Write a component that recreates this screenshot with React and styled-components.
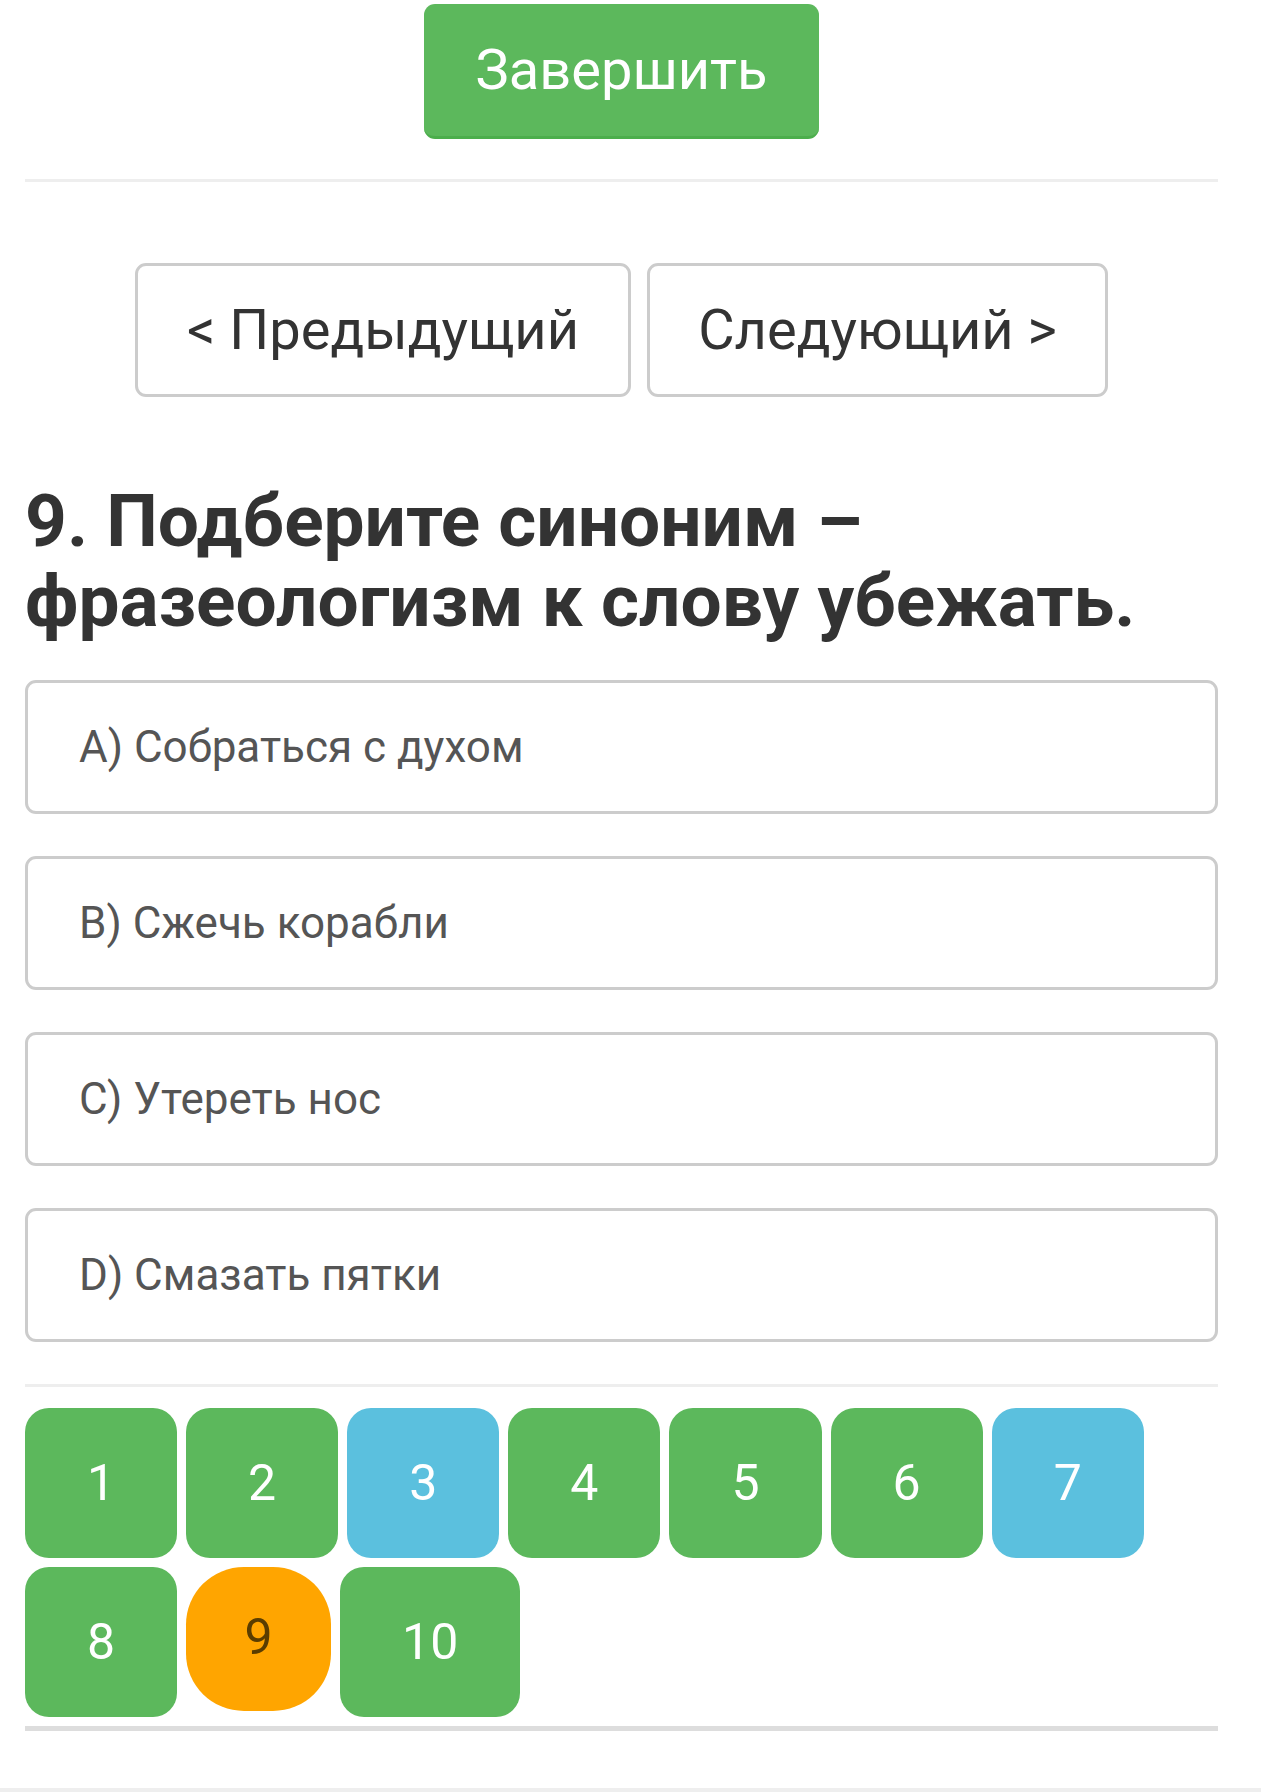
import React from "react";
import styled, { createGlobalStyle } from "styled-components";

const Global = createGlobalStyle`
  html, body { margin: 0; padding: 0; background: #fff; }
  body { font-family: Roboto, "Noto Sans", "Liberation Sans", sans-serif; }
`;

const Page = styled.div`
  width: 1193px;
  margin-left: 25px;
  padding-top: 4px;
  min-height: 1792px;
  box-sizing: border-box;
  position: relative;
`;

const Center = styled.div`
  display: flex;
  justify-content: center;
  gap: ${(p) => p.$gap || 0}px;
  margin-top: ${(p) => p.$mt || 0}px;
`;

const FinishButton = styled.button`
  width: 395px;
  height: 135px;
  background: #5cb85c;
  border: none;
  border-bottom: 3px solid #4cae4c;
  border-radius: 11px;
  color: #fff;
  font-family: Roboto, sans-serif;
  font-size: 56px;
  padding: 0;
`;

const Rule = styled.hr`
  border: none;
  height: ${(p) => p.$h || 3}px;
  background: ${(p) => p.$c || "#eee"};
  margin: ${(p) => p.$mt || 0}px 0 0 0;
`;

const NavButton = styled.button`
  width: ${(p) => p.$w}px;
  height: 134px;
  background: #fff;
  border: 3px solid #ccc;
  border-radius: 11px;
  color: #333;
  font-family: Roboto, sans-serif;
  font-size: 56px;
  padding: 0;
`;

const Question = styled.h3`
  margin: 84px 0 0 0;
  font-family: Roboto, sans-serif;
  font-weight: 700;
  font-size: 73px;
  line-height: 80px;
  color: #333;
`;

const Options = styled.div`
  display: flex;
  flex-direction: column;
  gap: 42px;
  margin-top: 39px;
`;

const Option = styled.div`
  height: 134px;
  box-sizing: border-box;
  border: 3px solid #ccc;
  border-radius: 11px;
  display: flex;
  align-items: center;
  padding-left: 51px;
  font-size: 44px;
  color: #555;
`;

const Grid = styled.div`
  display: flex;
  flex-wrap: wrap;
  gap: 9px;
  margin-top: 21px;
`;

const colors = { green: "#5cb85c", blue: "#5bc0de", orange: "#ffa500" };

const Num = styled.div`
  height: 150px;
  min-width: 152px;
  box-sizing: border-box;
  padding: 0 62px;
  border-radius: 24px;
  background: ${(p) => colors[p.$c]};
  color: ${(p) => (p.$c === "orange" ? "#5a3d00" : "#fff")};
  display: flex;
  align-items: center;
  justify-content: center;
  font-size: 50px;
`;

const Current = styled(Num)`
  min-width: 145px;
  width: 145px;
  height: 144px;
  padding: 0 0 4px 0;
  border-radius: 40%;
`;

const BottomEdge = styled.div`
  position: absolute;
  left: -25px;
  right: -68px;
  bottom: 0;
  height: 4px;
  background: #eee;
`;

const nums = [
  ["1", "green"], ["2", "green"], ["3", "blue"], ["4", "green"], ["5", "green"],
  ["6", "green"], ["7", "blue"], ["8", "green"], ["9", "orange"], ["10", "green"],
];

export default function App() {
  return (
    <>
      <Global />
      <Page>
        <Center>
          <FinishButton>Завершить</FinishButton>
        </Center>
        <Rule $mt={40} />
        <Center $mt={81} $gap={16}>
          <NavButton $w={496}>&lt; Предыдущий</NavButton>
          <NavButton $w={461}>Следующий &gt;</NavButton>
        </Center>
        <Question>9. Подберите синоним – фразеологизм к слову убежать.</Question>
        <Options>
          <Option>A) Собраться с духом</Option>
          <Option>B) Сжечь корабли</Option>
          <Option>C) Утереть нос</Option>
          <Option>D) Смазать пятки</Option>
        </Options>
        <Rule $mt={42} />
        <Grid>
          {nums.map(([n, c]) =>
            c === "orange" ? (
              <Current key={n} $c={c}>{n}</Current>
            ) : (
              <Num key={n} $c={c}>{n}</Num>
            )
          )}
        </Grid>
        <Rule $mt={9} $h={5} $c="#ddd" />
        <BottomEdge />
      </Page>
    </>
  );
}
